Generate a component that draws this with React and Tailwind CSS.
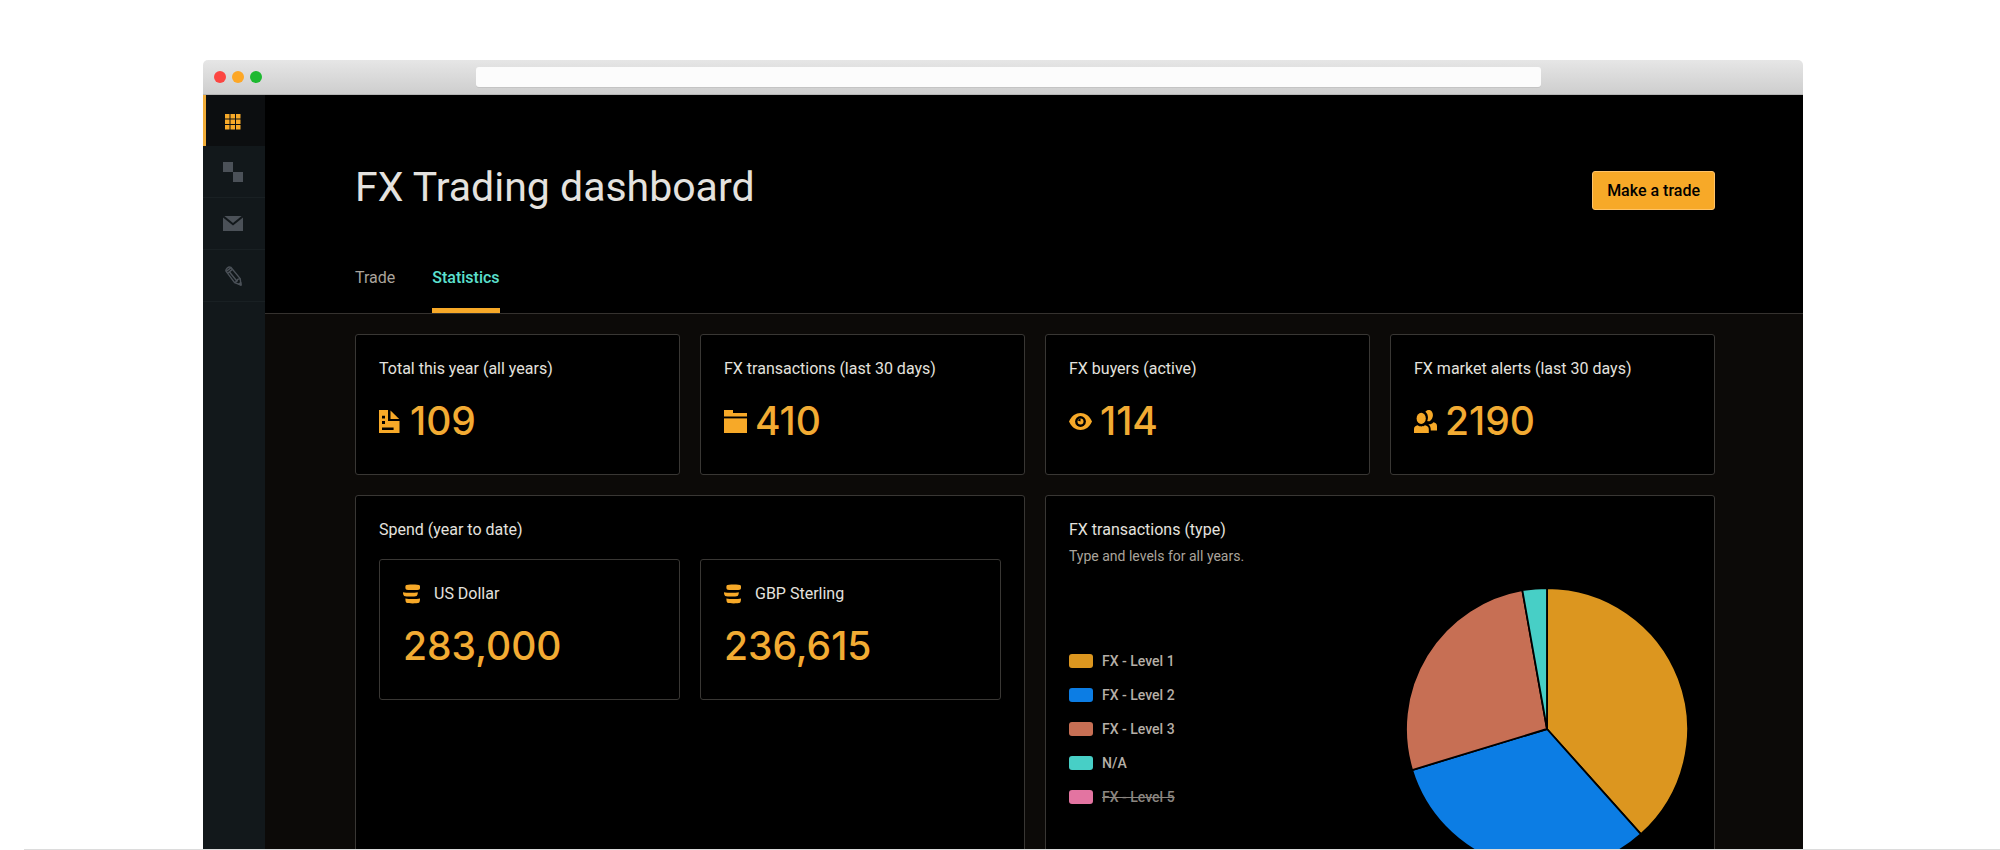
import { useState } from "react";
import clsx from "clsx";

const navItems = [
  { label: "Dashboard", Icon: GridIcon },
  { label: "Positions", Icon: SquaresIcon },
  { label: "Messages", Icon: MailIcon },
  { label: "Edit", Icon: PencilIcon },
];

const tabs = ["Trade", "Statistics"];

const stats = [
  { label: "Total this year (all years)", value: "109", Icon: DocumentIcon },
  { label: "FX transactions (last 30 days)", value: "410", Icon: FolderIcon },
  { label: "FX buyers (active)", value: "114", Icon: EyeIcon },
  { label: "FX market alerts (last 30 days)", value: "2190", Icon: PeopleIcon },
];

const spend = [
  { label: "US Dollar", value: "283,000" },
  { label: "GBP Sterling", value: "236,615" },
];

const levels = [
  { name: "FX - Level 1", value: 384, color: "#dc961f" },
  { name: "FX - Level 2", value: 319, color: "#0c7de4" },
  { name: "FX - Level 3", value: 269, color: "#c76f54" },
  { name: "N/A", value: 28, color: "#47cfc6" },
  { name: "FX - Level 5", value: 40, color: "#e374a1" },
];

function GridIcon() {
  return (
    <svg width="16" height="16" viewBox="0 0 16 16" fill="currentColor">
      {[0, 5.5, 11].map((y) =>
        [0, 5.5, 11].map((x) => (
          <rect key={`${x}-${y}`} x={x} y={y} width="4.5" height="4.5" />
        ))
      )}
    </svg>
  );
}

function SquaresIcon() {
  return (
    <svg width="20" height="20" viewBox="0 0 20 20" fill="currentColor">
      <rect x="0" y="0" width="10" height="10" />
      <rect x="10" y="10" width="10" height="10" />
    </svg>
  );
}

function MailIcon() {
  return (
    <svg width="20" height="15" viewBox="0 0 20 15" fill="currentColor">
      <path d="M0 1.6 10 9.6 20 1.6V15H0Z" />
      <path d="M1.4 0H18.6L10 7Z" />
    </svg>
  );
}

function PencilIcon() {
  return (
    <svg
      width="17"
      height="20"
      viewBox="0 0 17 20"
      fill="none"
      stroke="currentColor"
      strokeWidth="1.4"
      strokeLinejoin="round"
    >
      <path d="M1 5.2C0.4 2.8 3.4 0.4 5.8 1.3L15.2 12.6 16 19 9.6 16.6Z" />
      <path d="M1.2 5.4 6.2 1.6M2.6 7.2 7.4 3.4M4.5 6 12 15.2M9.6 16.6 12 15.2 12.6 13.4 15.2 12.6" />
      <path d="M13.8 18.2 16 19 15.7 16.4Z" fill="currentColor" />
    </svg>
  );
}

function DocumentIcon() {
  return (
    <svg width="23" height="23" viewBox="0 0 23 23" fill="currentColor">
      <path
        fillRule="evenodd"
        d="M0 0H9V11H20.5V23H0ZM3 5.8V8.6H6V5.8ZM3 11V14H6V11ZM3 17.6V20H14.6V17.6Z"
      />
      <path d="M11.5 0.4 20.2 9H11.5Z" />
    </svg>
  );
}

function FolderIcon() {
  return (
    <svg width="23" height="23" viewBox="0 0 23 23" fill="currentColor">
      <path d="M0 0H9V3H23V6.4H0Z" />
      <rect x="0" y="8.4" width="23" height="14.6" />
    </svg>
  );
}

function EyeIcon() {
  return (
    <svg width="23" height="23" viewBox="0 0 23 23">
      <path
        fill="currentColor"
        d="M0 11.5C2.6 5.8 6.8 3 11.5 3S20.4 5.8 23 11.5C20.4 17.2 16.2 20 11.5 20S2.6 17.2 0 11.5Z"
      />
      <circle cx="11.5" cy="11.5" r="5.4" fill="#000" />
      <circle cx="11.5" cy="11.5" r="3" fill="currentColor" />
      <path d="M11.5 11.5V8.3L8.3 10.2Z" fill="#000" />
    </svg>
  );
}

function PeopleIcon() {
  return (
    <svg width="23" height="23" viewBox="0 0 23 23" fill="currentColor">
      <ellipse cx="7.2" cy="8.4" rx="4.6" ry="5.6" />
      <path d="M0 23V19C0 16.8 1.6 15.6 3.6 15.2 5.6 16.8 9 16.8 11 15.2 13 15.6 14.8 16.8 14.8 19V23Z" />
      <path d="M11.4 1.8C13 -0.4 16 -0.4 17.8 1.4 19.8 4 19.2 9.2 15.6 11.2 14.8 11.4 13.8 11.4 13.2 11 14.6 8 14 4 11.4 1.8Z" />
      <path d="M19.4 12.2C21.6 12.6 23 13.8 23 16V20.4H16.8C16.8 17.6 16.2 15.6 14.4 14.2 16.4 14.6 18 13.8 19.4 12.2Z" />
    </svg>
  );
}

function CoinsIcon() {
  return (
    <svg width="17" height="20" viewBox="0 0 17 20" fill="currentColor">
      <path d="M2.8 1.2C3.4 0.2 16 0.2 16.6 1.2 17.2 2.4 17.2 4 16.6 5.2 15.6 6.4 3.8 6.4 2.8 5.2 2.2 4 2.2 2.4 2.8 1.2Z" />
      <path d="M0 8.2C3.4 9 11.4 9 14.8 8.2 14.8 10 14.4 11 13.6 12 11.4 12.8 3.4 12.8 1.2 12 0.4 11 0 10 0 8.2Z" />
      <path d="M2.4 14.4C5.6 15.2 13.8 15.2 17 14.4 17 16.4 16.8 17.6 16 18.8 13.8 19.6 5.6 19.6 3.4 18.8 2.6 17.6 2.4 16.4 2.4 14.4Z" />
    </svg>
  );
}

const Sidebar = () => (
  <nav className="w-[62px] shrink-0 bg-[#12181b]">
    {navItems.map(({ label, Icon }, i) => (
      <a
        key={label}
        href="#"
        aria-label={label}
        className={clsx(
          "flex items-center justify-center pr-0.5",
          i === 0
            ? "h-[51px] bg-[#0c0e10] pt-0.5 text-[#f7a928] shadow-[inset_3px_0_0_#f0ac38]"
            : "h-[52px] border-b border-[#192023] text-[#4b5158]"
        )}
      >
        <Icon />
      </a>
    ))}
  </nav>
);

const Card = ({ children }) => (
  <section className="rounded-[3px] border border-[#393734] bg-black px-[23px] pt-[22px] pb-[29px]">
    {children}
  </section>
);

const Amount = ({ children }) => (
  <span className="font-[Inter,sans-serif] text-[39px] leading-[48px] font-medium text-[#f2ab33]">
    {children}
  </span>
);

const polar = (turn) => {
  const angle = turn * 2 * Math.PI;
  return `${100 + 100 * Math.sin(angle)} ${100 - 100 * Math.cos(angle)}`;
};

const PieChart = ({ data }) => {
  const total = data.reduce((sum, d) => sum + d.value, 0);
  let start = 0;

  return (
    <svg className="mr-[3px] size-[282px]" viewBox="0 0 200 200" role="img" aria-label="FX transactions by type">
      {data.map((d) => {
        const end = start + d.value / total;
        const large = end - start > 0.5 ? 1 : 0;
        const path = `M100 100L${polar(start)}A100 100 0 ${large} 1 ${polar(end)}Z`;
        start = end;
        return <path key={d.name} d={path} fill={d.color} stroke="#000" strokeWidth="1.3" />;
      })}
    </svg>
  );
};

const TransactionTypes = () => {
  const [hidden, setHidden] = useState(["FX - Level 5"]);

  const toggle = (name) => {
    setHidden((prev) =>
      prev.includes(name) ? prev.filter((n) => n !== name) : [...prev, name]
    );
  };

  return (
    <Card>
      <h2>FX transactions (type)</h2>
      <p className="mt-1 text-sm text-[#aaa49c]">Type and levels for all years.</p>

      <div className="mt-[22px] flex items-center justify-between">
        <ul className="flex flex-col gap-3.5">
          {levels.map(({ name, color }) => (
            <li key={name}>
              <button
                className="flex items-center gap-[9px] text-sm font-medium text-[#b5afa7]"
                aria-pressed={!hidden.includes(name)}
                onClick={() => toggle(name)}
              >
                <span className="h-3.5 w-6 rounded-[3px]" style={{ backgroundColor: color }} />
                <span className={clsx(hidden.includes(name) && "text-[#8b8680] line-through")}>
                  {name}
                </span>
              </button>
            </li>
          ))}
        </ul>
        <PieChart data={levels.filter((l) => !hidden.includes(l.name))} />
      </div>
    </Card>
  );
};

const Dashboard = () => {
  const [tab, setTab] = useState("Statistics");

  return (
    <main className="min-w-0 flex-1 bg-[#0c0a08] text-base text-[#e4e2df]">
      {/* Page header */}
      <header className="border-b border-[#35322f] bg-black pt-[69px] pr-[88px] pl-[90px]">
        <div className="flex items-end justify-between">
          <h1 className="text-[41px] leading-[46px]">FX Trading dashboard</h1>
          <button className="h-[39px] rounded-[3px] border border-[#ffc368] bg-[#f7a928] px-3.5 font-medium text-black">
            Make a trade
          </button>
        </div>

        <div className="mt-14 flex gap-[37px]">
          {tabs.map((name) => (
            <button
              key={name}
              onClick={() => setTab(name)}
              className={clsx(
                "border-b-[5px] pb-[18px]",
                tab === name
                  ? "border-[#f7a928] font-medium text-[#5ce0cf]"
                  : "border-transparent text-[#aaa49c]"
              )}
            >
              {name}
            </button>
          ))}
        </div>
      </header>

      <div className="flex flex-col gap-5 pt-5 pr-[88px] pb-5 pl-[90px]">
        {/* Totals */}
        <div className="grid grid-cols-4 gap-5">
          {stats.map(({ label, value, Icon }) => (
            <Card key={label}>
              <h2>{label}</h2>
              <div className="mt-4 flex items-center gap-2 text-[#f7a928]">
                <Icon />
                <Amount>{value}</Amount>
              </div>
            </Card>
          ))}
        </div>

        <div className="grid grid-cols-2 gap-5">
          <Card>
            <h2>Spend (year to date)</h2>
            <div className="mt-[17px] grid grid-cols-2 gap-5">
              {spend.map(({ label, value }) => (
                <Card key={label}>
                  <h3 className="flex items-center gap-3.5">
                    <span className="text-[#f7a928]">
                      <CoinsIcon />
                    </span>
                    {label}
                  </h3>
                  <div className="mt-4 flex">
                    <Amount>{value}</Amount>
                  </div>
                </Card>
              ))}
            </div>
          </Card>
          <TransactionTypes />
        </div>
      </div>
    </main>
  );
};

export default function App() {
  return (
    <div className="flex h-screen flex-col overflow-hidden bg-white font-[Roboto,sans-serif]">
      <div className="flex min-h-0 flex-1 flex-col overflow-hidden pt-[60px] pr-[197px] pl-[203px]">
        {/* Browser bar */}
        <div className="flex h-[35px] shrink-0 items-center rounded-t-[5px] border-b border-[#b4b4b4] bg-linear-to-b from-[#e6e6e6] to-[#cecece] pr-[262px] pl-[11px]">
          <div className="mr-[214px] flex gap-1.5">
            <span className="size-3 rounded-full bg-[#fc4642]" />
            <span className="size-3 rounded-full bg-[#fda726]" />
            <span className="size-3 rounded-full bg-[#1db930]" />
          </div>
          <input
            type="text"
            aria-label="Address"
            className="h-5 min-w-0 flex-1 rounded-[3px] bg-[#fcfcfc] px-2 text-xs shadow-[0_1px_0_#c4c4c4]"
          />
        </div>

        <div className="flex min-h-0 flex-1 overflow-hidden">
          <Sidebar />
          <Dashboard />
        </div>
      </div>
      <div className="ml-6 border-t border-[#dcdcdc]" />
    </div>
  );
}
